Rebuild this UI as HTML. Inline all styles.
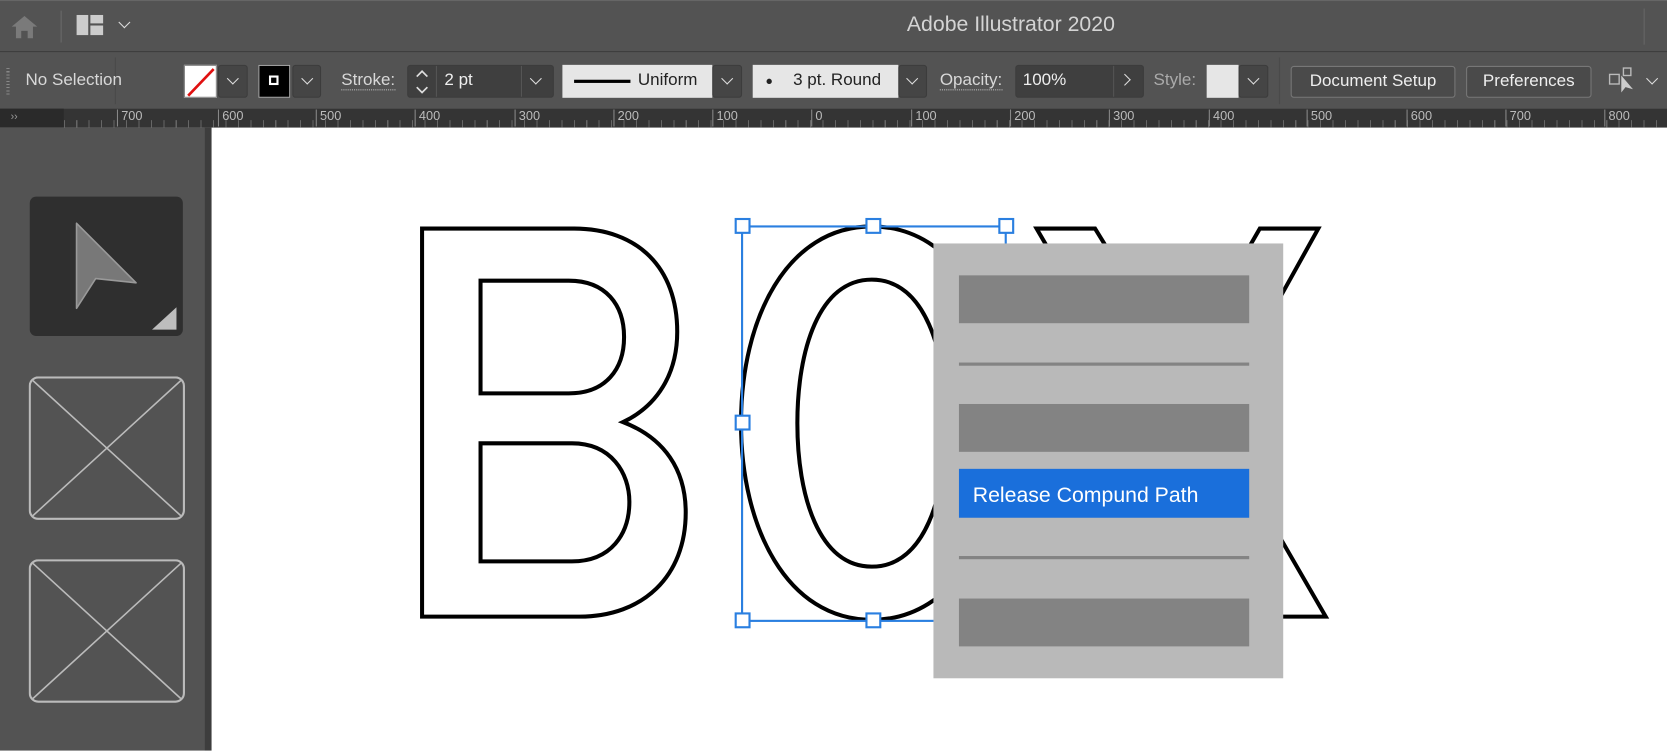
<!DOCTYPE html>
<html><head><meta charset="utf-8"><style>
html,body{margin:0;padding:0;width:1667px;height:751px;overflow:hidden;background:#fff;font-family:"Liberation Sans",sans-serif}
#w{position:absolute;left:0;top:0;width:1568px;height:706px;transform:scale(1.06314);transform-origin:0 0}
.a{position:absolute}
.t{color:#d8d8d8;font-size:16px}
.box{position:absolute;background:#454545;border:1px solid #3c3c3c;border-radius:3px;box-sizing:border-box}
.lt{position:absolute;background:#e6e6e6;box-sizing:border-box}
.chev{position:absolute;width:7px;height:7px;border-right:1.6px solid #ddd;border-bottom:1.6px solid #ddd;transform:rotate(45deg)}
.btn{position:absolute;border:1px solid #777;border-radius:3px;background:#4a4a4a;color:#eee;font-size:16px;text-align:center;line-height:28px;box-sizing:border-box}
.rn{position:absolute;top:103px;font-size:12px;color:#bbb;border-left:1px solid #888;padding-left:3px;height:16px;line-height:12px}
</style></head><body><div id="w">
<div class="a" style="left:0;top:0;width:1568px;height:48px;background:#535353;border-top:1px solid #666;box-sizing:border-box"></div>
<svg class="a" style="left:10px;top:13px" width="26" height="24"><path d="M13 2 L25 12 H21 V23 H16 V16 H10 V23 H5 V12 H1Z" fill="#7a7a7a"/></svg>
<div class="a" style="left:57px;top:10px;width:1px;height:30px;background:#6a6a6a"></div>
<svg class="a" style="left:72px;top:14px" width="26" height="20"><rect x="0" y="0" width="11" height="19" fill="#ccc"/><rect x="13" y="0" width="12" height="8" fill="#ccc"/><rect x="13" y="10" width="12" height="9" fill="#ccc"/></svg>
<div class="chev" style="left:113px;top:17px"></div>
<div class="a" style="left:853px;top:12px;font-size:20px;color:#d4d4d4">Adobe Illustrator 2020</div>
<div class="a" style="left:1546px;top:8px;width:1px;height:34px;background:#666"></div>
<div class="a" style="left:0;top:48px;width:1568px;height:54px;background:#535353;border-top:1px solid #3e3e3e;box-sizing:border-box"></div>
<div class="a" style="left:6px;top:64px;width:3px;height:26px;background:repeating-linear-gradient(#888 0 1px,transparent 1px 3px)"></div>
<div class="a" style="left:108px;top:54px;width:1px;height:44px;background:#4a4a4a"></div>
<div class="a t" style="left:24px;top:67px">No Selection</div>
<div class="a" style="left:173px;top:61px;width:31px;height:31px;background:#fff;border:1px solid #888;box-sizing:border-box;overflow:hidden"><svg width="31" height="31"><line x1="3" y1="28" x2="27" y2="3" stroke="#e01010" stroke-width="2.5"/></svg></div>
<div class="box" style="left:205px;top:61px;width:28px;height:31px"></div><div class="chev" style="left:215px;top:70px"></div>
<div class="a" style="left:243px;top:61px;width:30px;height:31px;background:#000;border:1px solid #aaa;box-sizing:border-box"><div class="a" style="left:9px;top:9px;width:9px;height:9px;border:2px solid #fff;box-sizing:border-box"></div></div>
<div class="box" style="left:275px;top:61px;width:27px;height:31px"></div><div class="chev" style="left:285px;top:70px"></div>
<div class="a t" style="left:321px;top:67px;border-bottom:1px dotted #bbb;line-height:17px">Stroke:</div>
<div class="box" style="left:383px;top:61px;width:138px;height:31px;background:#3f3f3f"></div>
<div class="a" style="left:410px;top:62px;width:1px;height:29px;background:#555"></div>
<div class="a" style="left:490px;top:62px;width:1px;height:29px;background:#555"></div>
<svg class="a" style="left:389px;top:63px" width="16" height="28"><path d="M3 9 L8 4 L13 9 M3 19 L8 24 L13 19" stroke="#ddd" stroke-width="1.6" fill="none"/></svg>
<div class="a t" style="left:418px;top:67px;color:#eee">2 pt</div>
<div class="chev" style="left:500px;top:70px"></div>
<div class="lt" style="left:529px;top:61px;width:141px;height:31px"></div>
<div class="a" style="left:540px;top:75px;width:53px;height:3px;background:#000"></div>
<div class="a" style="left:600px;top:67px;font-size:16px;color:#222">Uniform</div>
<div class="box" style="left:670px;top:61px;width:28px;height:31px"></div><div class="chev" style="left:680px;top:70px"></div>
<div class="lt" style="left:708px;top:61px;width:137px;height:31px"></div>
<div class="a" style="left:721px;top:74px;width:5px;height:5px;border-radius:50%;background:#222"></div>
<div class="a" style="left:746px;top:67px;font-size:16px;color:#222">3 pt. Round</div>
<div class="box" style="left:845px;top:61px;width:27px;height:31px"></div><div class="chev" style="left:854px;top:70px"></div>
<div class="a t" style="left:884px;top:67px;border-bottom:1px dotted #bbb;line-height:17px">Opacity:</div>
<div class="box" style="left:955px;top:61px;width:121px;height:31px;background:#3f3f3f"></div>
<div class="a" style="left:1047px;top:62px;width:1px;height:29px;background:#555"></div>
<div class="a t" style="left:962px;top:67px;color:#eee">100%</div>
<div class="a" style="left:1054px;top:71px;width:7px;height:7px;border-right:1.6px solid #ddd;border-top:1.6px solid #ddd;transform:rotate(45deg)"></div>
<div class="a t" style="left:1085px;top:67px;color:#aaa">Style:</div>
<div class="lt" style="left:1135px;top:61px;width:30px;height:31px"></div>
<div class="box" style="left:1165px;top:61px;width:28px;height:31px"></div><div class="chev" style="left:1175px;top:70px"></div>
<div class="a" style="left:1203px;top:54px;width:1px;height:44px;background:#4a4a4a"></div>
<div class="btn" style="left:1214px;top:62px;width:155px;height:30px">Document Setup</div>
<div class="btn" style="left:1379px;top:62px;width:118px;height:30px">Preferences</div>
<svg class="a" style="left:1512px;top:62px" width="30" height="28"><rect x="2" y="8" width="9" height="9" fill="none" stroke="#bbb" stroke-width="1.3"/><rect x="15" y="2" width="7" height="7" fill="none" stroke="#bbb" stroke-width="1.3"/><path d="M13 9 L13 25 L17 20 L24 22Z" fill="#ccc"/></svg>
<div class="chev" style="left:1550px;top:70px"></div>
<div class="a" style="left:0;top:102px;width:1568px;height:18px;background:#343434"></div>
<div class="a" style="left:0;top:102px;width:60px;height:18px;background:#2a2a2a;color:#999;font-size:10px;line-height:18px;padding-left:10px;box-sizing:border-box">››</div>
<div class="a" style="left:60px;top:113px;width:1508px;height:7px;background:repeating-linear-gradient(90deg,#666 0 1px,transparent 1px 11.7px)"></div>
<div class="rn" style="left:110px">700</div><div class="rn" style="left:205px">600</div><div class="rn" style="left:297px">500</div><div class="rn" style="left:390px">400</div><div class="rn" style="left:484px">300</div><div class="rn" style="left:577px">200</div><div class="rn" style="left:670px">100</div><div class="rn" style="left:763px">0</div><div class="rn" style="left:857px">100</div><div class="rn" style="left:950px">200</div><div class="rn" style="left:1043px">300</div><div class="rn" style="left:1137px">400</div><div class="rn" style="left:1229px">500</div><div class="rn" style="left:1323px">600</div><div class="rn" style="left:1416px">700</div><div class="rn" style="left:1509px">800</div>
<div class="a" style="left:0;top:120px;width:192px;height:586px;background:#535353"></div>
<div class="a" style="left:192px;top:120px;width:7px;height:586px;background:#3d3d3d"></div>
<div class="a" style="left:28px;top:185px;width:144px;height:131px;background:#2f2f2f;border-radius:6px"></div>
<svg class="a" style="left:60px;top:200px" width="112" height="115"><path d="M12 10 L12 90 L30 62 L68 66Z" fill="#787878" stroke="#999" stroke-width="1.5" stroke-linejoin="round"/><path d="M106 89 L106 110 L83 110Z" fill="#bdbdbd"/></svg>
<svg class="a" style="left:27px;top:354px" width="147" height="136"><rect x="1" y="1" width="145" height="133" rx="8" fill="none" stroke="#bbb" stroke-width="2"/><path d="M4 4 L143 131 M143 4 L4 131" stroke="#bbb" stroke-width="1.5"/></svg>
<svg class="a" style="left:27px;top:526px" width="147" height="136"><rect x="1" y="1" width="145" height="133" rx="8" fill="none" stroke="#bbb" stroke-width="2"/><path d="M4 4 L143 131 M143 4 L4 131" stroke="#bbb" stroke-width="1.5"/></svg>
<svg class="a" style="left:0;top:0" width="1568" height="706">
<g fill="#fff" stroke="#000" stroke-width="3.8" fill-rule="evenodd">
<path d="M397 215 H540 C600 215 637 252 637 312 C637 352 618 382 586 397 C625 412 645 442 645 482 C645 542 605 580 545 580 H397 Z M452 264 H535 C570 264 587 287 587 317 C587 347 570 370 535 370 H452 Z M452 417 H538 C575 417 592 445 592 472 C592 502 575 528 538 528 H452 Z"/>
<path d="M975 215 H1030 L1110 345 L1185 215 H1240 L1140 395 L1247 580 H1190 L1110 445 L1030 580 H975 L1080 395 Z"/>
<path d="M820 213 C740 213 697 300 697 398 C697 496 740 583 820 583 C900 583 945 496 945 398 C945 300 900 213 820 213 Z M820 263 C770 263 750 330 750 398 C750 466 770 533 820 533 C870 533 890 466 890 398 C890 330 870 263 820 263 Z"/>
</g>
<rect x="698" y="213" width="248" height="371" fill="none" stroke="#2a7fe0" stroke-width="2"/>
<g fill="#fff" stroke="#2a7fe0" stroke-width="2">
<rect x="692" y="206" width="13" height="13"/><rect x="815" y="206" width="13" height="13"/><rect x="940" y="206" width="13" height="13"/>
<rect x="692" y="391" width="13" height="13"/>
<rect x="692" y="577" width="13" height="13"/><rect x="815" y="577" width="13" height="13"/>
</g>
<rect x="878" y="229" width="329" height="409" fill="#b9b9b9"/>
<g fill="#838383"><rect x="902" y="259" width="273" height="45"/><rect x="902" y="341" width="273" height="3"/><rect x="902" y="380" width="273" height="45"/><rect x="902" y="523" width="273" height="3"/><rect x="902" y="563" width="273" height="45"/></g>
<rect x="902" y="441" width="273" height="46" fill="#1a6fdb"/>
<text x="915" y="472" font-family="Liberation Sans, sans-serif" font-size="20" fill="#fff">Release Compund Path</text>
</svg>
</div></body></html>
